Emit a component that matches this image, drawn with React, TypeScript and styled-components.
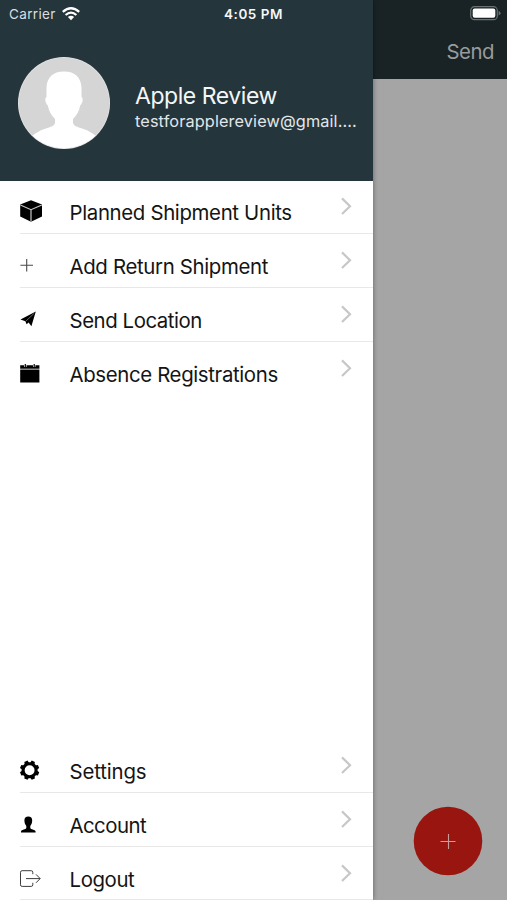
import React from "react";
import styled, { createGlobalStyle } from "styled-components";

const GlobalStyle = createGlobalStyle`
  * { box-sizing: border-box; }
  html, body { margin: 0; padding: 0; }
  body {
    font-family: Inter, "Liberation Sans", sans-serif;
    font-feature-settings: "calt" 0;
    overflow: hidden;
  }
`;

const Screen = styled.div`
  display: flex;
  width: 507px;
  height: 900px;
  background: #a5a5a5;
`;

const Drawer = styled.aside`
  position: relative;
  z-index: 1;
  display: flex;
  flex-direction: column;
  width: 372.5px;
  flex: none;
  background: #fff;
  box-shadow: 0 0 5px rgba(0, 0, 0, 0.4);
`;

const Header = styled.header`
  height: 180.5px;
  flex: none;
  background: #25353c;
  color: #f4f7f8;
`;

const StatusBar = styled.div`
  display: flex;
  align-items: center;
  height: 27px;
  padding-left: 9px;
`;

const Carrier = styled.span`
  width: 53px;
  font-size: 13.5px;
  letter-spacing: 0.35px;
  color: #d9dfe1;
  white-space: nowrap;
`;

const Time = styled.span`
  margin-left: 144px;
  font-size: 13.5px;
  font-weight: 600;
  letter-spacing: 0.55px;
  white-space: nowrap;
`;

const Profile = styled.div`
  display: flex;
  padding: 30px 15px 0 18px;
`;

const Avatar = styled.svg`
  width: 92px;
  height: 92px;
  flex: none;
`;

const Identity = styled.div`
  margin: 25px 0 0 25px;
  min-width: 0;
`;

const Name = styled.div`
  font-size: 23px;
  line-height: 28px;
  letter-spacing: -0.45px;
  white-space: nowrap;
`;

const Email = styled.div`
  font-size: 16.3px;
  line-height: 22px;
  letter-spacing: 0.12px;
  color: #e1e7e9;
  white-space: nowrap;
`;

const Menu = styled.nav<{ $bottom?: boolean }>`
  margin-top: ${(p) => (p.$bottom ? "auto" : "-0.5px")};
  margin-bottom: ${(p) => (p.$bottom ? "-0.4px" : "0")};
`;

const Row = styled.div<{ $line: boolean }>`
  display: grid;
  grid-template-columns: 49.5px 1fr 20px;
  height: 53.9px;
  margin-left: 20px;
  padding-right: 17.5px;
  border-bottom: 1px solid ${(p) => (p.$line ? "#e8e8e8" : "transparent")};
`;

const RowIcon = styled.svg`
  width: 30px;
  height: 30px;
  margin: 16px 0 0 -2px;
`;

const Label = styled.span<{ $spacing: number }>`
  padding-top: 19px;
  font-size: 20.4px;
  line-height: 28px;
  letter-spacing: ${(p) => p.$spacing}px;
  color: #141414;
  white-space: nowrap;
`;

const Chevron = styled.svg`
  width: 20px;
  height: 20px;
  margin-top: 16px;
`;

const Content = styled.main`
  display: flex;
  flex: 1;
  flex-direction: column;
  justify-content: space-between;
`;

const AppBar = styled.div`
  display: flex;
  flex-direction: column;
  align-items: flex-end;
  height: 79px;
  background: #192325;
`;

const Battery = styled.svg`
  width: 32px;
  height: 16px;
  margin: 5px 5px 0 0;
`;

const SendButton = styled.span`
  margin: 18px 13px 0 0;
  font-size: 20.4px;
  line-height: 26px;
  letter-spacing: -0.5px;
  color: #979c9d;
`;

const AddButton = styled.svg`
  width: 70px;
  height: 70px;
  align-self: flex-end;
  margin: 0 24px 24px 0;
`;

const icons: Record<string, React.ReactNode> = {
  cube: (
    <>
      <path d="M13 4.2 24 8.6V20.4L13 25.8 2.2 20.4V8.6Z" fill="#000" />
      <path d="M2.4 9 13 13.7 23.8 9M13 13.7V25.6" fill="none" stroke="#c8c8c8" strokeWidth="1.2" />
    </>
  ),
  plus: <path d="M2.4 15.2H15M8.7 9V21.5" fill="none" stroke="#4a4a4a" strokeWidth="1.1" />,
  send: (
    <>
      <path d="M17.8 7.4 2.5 15.6 7.4 17.2 8.6 20.2 10.6 18.6 13.4 22.2Z" fill="#000" />
      <path d="M16.3 9.2 7.8 17.2" fill="none" stroke="#aaa" strokeWidth="0.6" />
    </>
  ),
  calendar: (
    <>
      <path d="M2.2 7.2H21.4V10.8H2.2ZM2.2 12H21.4V24.4H2.2Z" fill="#000" />
      <path d="M2.2 11.4H21.4" stroke="#777" strokeWidth="1" />
      <path d="M7.3 6.2V9M16.2 6.2V9" stroke="#fff" strokeWidth="2.4" />
      <path d="M7.3 6V9M16.2 6V9" stroke="#000" strokeWidth="1.2" />
    </>
  ),
  gear: (
    <g transform="translate(11.6 15.2)">
      <circle r="6.5" fill="none" stroke="#000" strokeWidth="3.1" />
      {[22.5, 67.5, 112.5, 157.5, 202.5, 247.5, 292.5, 337.5].map((a) => (
        <path key={a} d="M-2.4-6.8-1.7-9.7H1.7L2.4-6.8Z" transform={`rotate(${a})`} />
      ))}
    </g>
  ),
  person: (
    <path
      d="M10.3 7.6C12.8 7.6 14.3 9.2 14.2 11.5 14.1 14 13.4 15.6 12.3 16.9V19.1C12.6 20.5 17.2 20.8 17.6 22.4V23.5H3V22.4C3.4 20.8 8 20.5 8.3 19.1V16.9C7.2 15.6 6.5 14 6.4 11.5 6.3 9.2 7.8 7.6 10.3 7.6Z"
      fill="#000"
    />
  ),
  logout: (
    <path
      d="M14.8 11.2V9.3Q14.8 7.7 13.2 7.7H4.1Q2.5 7.7 2.5 9.3V21.8Q2.5 23.4 4.1 23.4H13.2Q14.8 23.4 14.8 21.8V19.8M8 15.6H22M18 11.4 22.2 15.6 18 19.8"
      fill="none"
      stroke="#3d3d3d"
      strokeWidth="1"
    />
  ),
};

interface Item {
  icon: string;
  label: string;
  spacing: number;
  line: boolean;
}

const mainItems: Item[] = [
  { icon: "cube", label: "Planned Shipment Units", spacing: -0.34, line: true },
  { icon: "plus", label: "Add Return Shipment", spacing: -0.34, line: true },
  { icon: "send", label: "Send Location", spacing: -0.44, line: true },
  { icon: "calendar", label: "Absence Registrations", spacing: -0.36, line: false },
];

const footerItems: Item[] = [
  { icon: "gear", label: "Settings", spacing: -0.14, line: true },
  { icon: "person", label: "Account", spacing: -0.55, line: true },
  { icon: "logout", label: "Logout", spacing: -0.4, line: true },
];

function MenuRow({ icon, label, spacing, line }: Item) {
  return (
    <Row $line={line}>
      <RowIcon viewBox="0 0 30 30">{icons[icon]}</RowIcon>
      <Label $spacing={spacing}>{label}</Label>
      <Chevron viewBox="0 0 20 20">
        <path d="M7 2.4 15 10.2 7 18" fill="none" stroke="#c7c7ca" strokeWidth="2.2" />
      </Chevron>
    </Row>
  );
}

function WifiIcon() {
  return (
    <svg width="18" height="14" viewBox="0 0 18 14">
      <g fill="none" stroke="#fff" strokeWidth="2.3">
        <path d="M.8 4.8Q9-2.2 17.2 4.8" />
        <path d="M3.6 8Q9 3.3 14.4 8" />
      </g>
      <path d="M5.9 10Q9 7.4 12.1 10L9 13.2Z" fill="#fff" />
    </svg>
  );
}

export default function App() {
  return (
    <>
      <GlobalStyle />
      <Screen>
        <Drawer>
          <Header>
            <StatusBar>
              <Carrier>Carrier</Carrier>
              <WifiIcon />
              <Time>4:05 PM</Time>
            </StatusBar>
            <Profile>
              <Avatar viewBox="0 0 92 92">
                <defs>
                  <clipPath id="avatar-circle">
                    <circle cx="46" cy="46" r="45.3" />
                  </clipPath>
                </defs>
                <circle cx="46" cy="46" r="46" fill="#e6e6e6" />
                <g clipPath="url(#avatar-circle)">
                  <rect width="92" height="92" fill="#d5d5d5" />
                  <path
                    d="M46 14.5C57 14.5 63.3 20.5 63.5 31V40C65.6 41 64.8 46 62.2 48.5 61 54.5 58.5 58.5 55 62V66C56 70 61 70 67 72.5 74 75.5 77 78 80 81V92H12V81C15 78 18 75.5 25 72.5 31 70 36 70 37 66V62C33.5 58.5 31 54.5 29.8 48.5 27.2 46 26.4 41 28.5 40V31C28.7 20.5 35 14.5 46 14.5Z"
                    fill="#fff"
                  />
                </g>
              </Avatar>
              <Identity>
                <Name>Apple Review</Name>
                <Email>testforapplereview@gmail....</Email>
              </Identity>
            </Profile>
          </Header>
          <Menu>
            {mainItems.map((item) => (
              <MenuRow key={item.label} {...item} />
            ))}
          </Menu>
          <Menu $bottom>
            {footerItems.map((item) => (
              <MenuRow key={item.label} {...item} />
            ))}
          </Menu>
        </Drawer>
        <Content>
          <AppBar>
            <Battery viewBox="0 0 32 16">
              <rect x=".7" y="1.7" width="26.6" height="13" rx="3.8" fill="none" stroke="#697173" strokeWidth="1.2" />
              <rect x="2.7" y="3.6" width="22.6" height="9.2" rx="2" fill="#fff" />
              <path d="M28.6 6Q30.5 6.6 30.5 8.2 30.5 9.8 28.6 10.4Z" fill="#697173" />
            </Battery>
            <SendButton>Send</SendButton>
          </AppBar>
          <AddButton viewBox="0 0 70 70">
            <circle cx="35" cy="35" r="34.3" fill="#991610" />
            <path d="M27.5 35.5H42.5M35.5 28V43" stroke="#c99d9b" strokeWidth="1.1" />
          </AddButton>
        </Content>
      </Screen>
    </>
  );
}
